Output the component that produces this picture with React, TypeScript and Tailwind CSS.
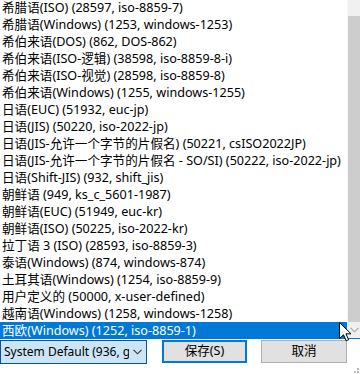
import React from "react";

const encodings = [
  "希腊语(ISO) (28597, iso-8859-7)",
  "希腊语(Windows) (1253, windows-1253)",
  "希伯来语(DOS) (862, DOS-862)",
  "希伯来语(ISO-逻辑) (38598, iso-8859-8-i)",
  "希伯来语(ISO-视觉) (28598, iso-8859-8)",
  "希伯来语(Windows) (1255, windows-1255)",
  "日语(EUC) (51932, euc-jp)",
  "日语(JIS) (50220, iso-2022-jp)",
  "日语(JIS-允许一个字节的片假名) (50221, csISO2022JP)",
  "日语(JIS-允许一个字节的片假名 - SO/SI) (50222, iso-2022-jp)",
  "日语(Shift-JIS) (932, shift_jis)",
  "朝鲜语 (949, ks_c_5601-1987)",
  "朝鲜语(EUC) (51949, euc-kr)",
  "朝鲜语(ISO) (50225, iso-2022-kr)",
  "拉丁语 3 (ISO) (28593, iso-8859-3)",
  "泰语(Windows) (874, windows-874)",
  "土耳其语(Windows) (1254, iso-8859-9)",
  "用户定义的 (50000, x-user-defined)",
  "越南语(Windows) (1258, windows-1258)",
  "西欧(Windows) (1252, iso-8859-1)",
];

const selected = 19;

// 下拉列表里的一行
function EncodingRow({ label, active }: { label: string; active: boolean }) {
  return (
    <div
      className={
        active
          ? "h-[17px] pl-[2px] leading-[17px] whitespace-nowrap bg-[#0078d7] text-white"
          : "h-[17px] pl-[2px] leading-[17px] whitespace-nowrap text-black"
      }
    >
      {label}
    </div>
  );
}

function Chevron({ className }: { className: string }) {
  return (
    <svg className={className} width="9" height="6" viewBox="0 0 9 6" fill="none">
      <path d="M0.5 0.8 L4.5 4.8 L8.5 0.8" stroke="currentColor" strokeWidth="1.1" />
    </svg>
  );
}

export default function App() {
  return (
    <div
      className="relative w-[360px] h-[374px] bg-white overflow-hidden text-[12.6px]"
      style={{ fontFamily: '"Noto Sans", "Noto Sans CJK SC", sans-serif' }}
    >
      {/* 编码列表 */}
      <div className="flex h-[339px] border-b border-[#0078d7]">
        <div className="flex-1 overflow-hidden">
          <div className="-mt-px">
            {encodings.map((e, i) => (
              <EncodingRow key={e} label={e} active={i === selected} />
            ))}
          </div>
        </div>
        <div className="w-[13px] flex flex-col border-l border-[#f7f7f7]">
          <div className="h-[16px] bg-[#f0f0f0]" />
          <div className="flex-1 bg-[#cdcdcd]" />
          <div className="h-[16px] bg-[#f0f0f0] flex items-center justify-end pr-[1px]">
            <Chevron className="text-[#a3a3a3]" />
          </div>
        </div>
      </div>

      {/* 底部操作栏 */}
      <div className="flex items-start mt-px">
        <div className="w-[147px] h-[24px] bg-[#cce4f7] border border-[#005499] flex items-center overflow-hidden">
          <span className="flex-1 pl-[3px] whitespace-nowrap overflow-hidden text-[12px] text-black">System Default (936, gb2312)</span>
          <Chevron className="text-[#333] mx-[4px] shrink-0" />
        </div>
        <button className="ml-[15px] w-[85px] h-[23px] bg-[#e1e1e1] border-2 border-[#0078d7] text-black flex items-center justify-center">
          保存(S)
        </button>
        <button className="ml-[14px] w-[86px] h-[23px] bg-[#e1e1e1] border border-[#adadad] text-black flex items-center justify-center">
          取消
        </button>
      </div>

      {/* 鼠标指针 */}
      <svg className="absolute left-[339px] top-[322px]" width="13" height="20" viewBox="0 0 13 20">
        <path d="M0.5 0.5 L0.5 16.5 L4.5 12.8 L7.2 18.8 L9.6 17.8 L7 11.8 L12 11.8 Z" fill="#fff" stroke="#000" strokeWidth="1" strokeLinejoin="round" />
      </svg>

      {/* 调整大小手柄 */}
      <div className="absolute right-[1px] bottom-[1px] grid grid-cols-2 gap-[1px]">
        <span />
        <span className="w-[2px] h-[2px] bg-[#bdbdbd]" />
        <span className="w-[2px] h-[2px] bg-[#bdbdbd]" />
        <span className="w-[2px] h-[2px] bg-[#bdbdbd]" />
      </div>
    </div>
  );
}
